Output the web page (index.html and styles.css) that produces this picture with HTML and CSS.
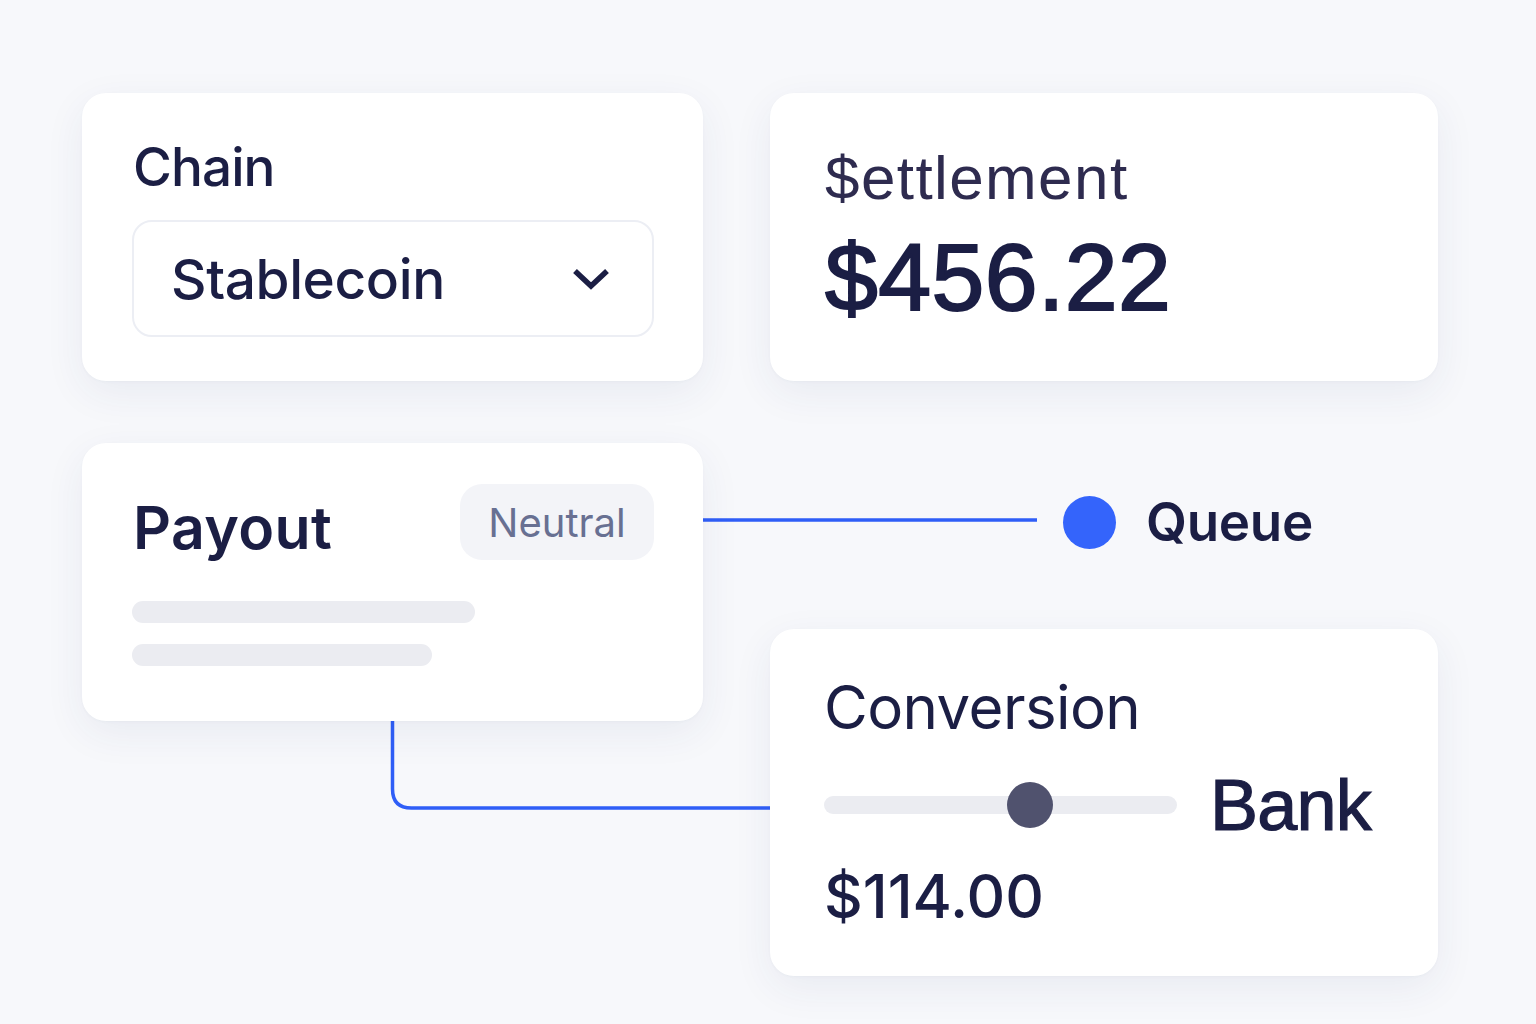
FILE: index.html
```html
<!DOCTYPE html>
<html lang="en">
<head>
<meta charset="utf-8">
<title>Payout routing</title>
<link rel="stylesheet" href="styles.css">
</head>
<body>
<main class="canvas">
  <svg class="wires" width="1536" height="1024" viewBox="0 0 1536 1024" aria-hidden="true">
    <path d="M703 520 H1037" />
    <path d="M392.5 721 V789 Q392.5 808 411.5 808 H770" />
  </svg>

  <div class="board">
    <section class="card card-chain">
      <h2 class="label">Chain</h2>
      <div class="select">
        <span class="select-value">Stablecoin</span>
        <svg class="chevron" width="38" height="24" viewBox="0 0 38 24" aria-hidden="true">
          <path d="M3 4 L19 19 L35 4" />
        </svg>
      </div>
    </section>

    <section class="card card-settlement">
      <h2 class="settle-title">$ettlement</h2>
      <p class="settle-amount">$456.22</p>
    </section>

    <section class="card card-payout">
      <div class="payout-head">
        <h2 class="payout-title">Payout</h2>
        <span class="badge">Neutral</span>
      </div>
      <div class="skeleton">
        <span class="bar bar-long"></span>
        <span class="bar bar-short"></span>
      </div>
    </section>

    <div class="right-stack">
      <div class="queue">
        <span class="queue-dot"></span>
        <span class="queue-label">Queue</span>
      </div>

      <section class="card card-conversion">
        <h2 class="conv-title">Conversion</h2>
        <div class="conv-row">
          <div class="slider">
            <span class="slider-knob"></span>
          </div>
          <span class="conv-bank">Bank</span>
        </div>
        <p class="conv-amount">$114.00</p>
      </section>
    </div>
  </div>
</main>
</body>
</html>
```

FILE: styles.css
```css
* {
  box-sizing: border-box;
}

html,
body {
  margin: 0;
  padding: 0;
}

body {
  width: 1536px;
  height: 1024px;
  overflow: hidden;
  background: #f7f8fb;
  font-family: Inter, "Noto Sans", sans-serif;
  color: #1b1e44;
}

.canvas {
  position: relative;
  width: 1536px;
  height: 1024px;
  padding: 93px 0 0 82px;
}

/* connector lines between cards */
.wires {
  position: absolute;
  left: 0;
  top: 0;
  fill: none;
  stroke: #2f5ef7;
  stroke-width: 3.5;
}

.board {
  position: relative;
  display: grid;
  grid-template-columns: 621px 668px;
  grid-template-rows: 288px auto;
  column-gap: 67px;
  row-gap: 62px;
  align-items: start;
}

.card {
  background: #ffffff;
  border-radius: 24px;
  box-shadow: 0 12px 40px rgba(40, 52, 110, 0.07), 0 1px 3px rgba(40, 52, 110, 0.03);
}

h2,
p {
  margin: 0;
  font-weight: inherit;
}

/* Chain card */
.card-chain {
  height: 288px;
  padding: 44px 49px 0 50px;
}

.label {
  font-size: 53px;
  font-weight: 500;
  line-height: 60px;
  letter-spacing: -0.9px;
  padding-left: 1px;
}

.select {
  margin-top: 23px;
  height: 117px;
  border: 2px solid #eceef4;
  border-radius: 20px;
  display: flex;
  align-items: center;
  justify-content: space-between;
  padding: 0 42px 0 37px;
}

.select-value {
  font-size: 55px;
  font-weight: 500;
  letter-spacing: -0.4px;
}

.chevron {
  fill: none;
  stroke: #1b1e44;
  stroke-width: 5.5;
  stroke-linejoin: miter;
}

/* Settlement card */
.card-settlement {
  height: 288px;
  padding: 50px 0 0 55px;
}

.settle-title {
  font-family: "Liberation Sans", Arial, sans-serif;
  font-size: 62px;
  font-weight: 400;
  line-height: 70px;
  color: #2e2b4f;
  letter-spacing: 1.4px;
}

.settle-amount {
  margin-top: 14px;
  font-family: "Liberation Sans", Arial, sans-serif;
  font-size: 95px;
  font-weight: 400;
  line-height: 100px;
  letter-spacing: 0.4px;
  -webkit-text-stroke: 2px #1b1e44;
}

/* Payout card */
.card-payout {
  height: 278px;
  padding: 41px 49px 0 50px;
}

.payout-head {
  display: flex;
  justify-content: space-between;
  align-items: flex-start;
}

.payout-title {
  margin-top: 8px;
  font-size: 59px;
  font-weight: 600;
  line-height: 72px;
  letter-spacing: 0.4px;
  padding-left: 1px;
}

.badge {
  width: 194px;
  height: 76px;
  border-radius: 22px;
  background: #f3f4f8;
  color: #687092;
  font-size: 40px;
  font-weight: 400;
  display: flex;
  align-items: center;
  justify-content: center;
}

.skeleton {
  margin-top: 37px;
  display: flex;
  flex-direction: column;
  gap: 21px;
}

.bar {
  display: block;
  height: 22px;
  border-radius: 11px;
  background: #ebecf1;
}

.bar-long {
  width: 343px;
}

.bar-short {
  width: 300px;
}

/* Right column, second row */
.right-stack {
  display: flex;
  flex-direction: column;
}

.queue {
  margin-top: 52px;
  height: 54px;
  display: flex;
  align-items: center;
  padding-left: 293px;
}

.queue-dot {
  width: 53px;
  height: 53px;
  border-radius: 50%;
  background: #3464fb;
}

.queue-label {
  margin-left: 30px;
  font-size: 53px;
  font-weight: 600;
  letter-spacing: -0.3px;
}

.card-conversion {
  margin-top: 80px;
  height: 347px;
  padding: 42px 0 0 54px;
}

.conv-title {
  font-size: 60px;
  font-weight: 400;
  line-height: 72px;
  letter-spacing: -0.6px;
}

.conv-row {
  margin-top: 22px;
  display: flex;
  align-items: center;
}

.slider {
  position: relative;
  width: 353px;
  height: 18px;
  border-radius: 9px;
  background: #ebecf1;
}

.slider-knob {
  position: absolute;
  left: 183px;
  top: -14px;
  width: 46px;
  height: 46px;
  border-radius: 50%;
  background: #50526e;
}

.conv-bank {
  margin-left: 33px;
  font-family: "Liberation Sans", Arial, sans-serif;
  font-size: 72px;
  font-weight: 400;
  line-height: 80px;
  letter-spacing: -0.8px;
  -webkit-text-stroke: 1.2px #1b1e44;
}

.conv-amount {
  margin-top: 16px;
  font-size: 60px;
  font-weight: 500;
  line-height: 70px;
}
```
